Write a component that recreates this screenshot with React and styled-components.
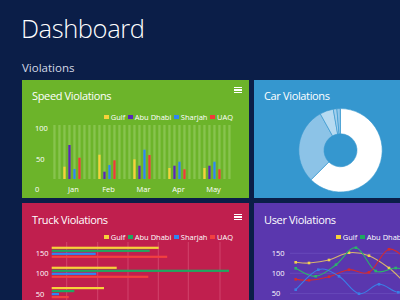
import styled, { createGlobalStyle } from "styled-components";

const GlobalStyle = createGlobalStyle`
  html, body {
    margin: 0;
    overflow: hidden;
    background: #0b1e48;
  }
  body {
    font-family: "Open Sans", "Noto Sans", sans-serif;
  }
`;

const Page = styled.main`
  width: 400px;
  height: 300px;
  padding: 12px 0 0 21px;
  box-sizing: border-box;
  overflow: hidden;
`;

const Heading = styled.h1`
  margin: 0;
  font-size: 25.5px;
  font-weight: 300;
  line-height: 32px;
  letter-spacing: -0.4px;
  color: #ffffff;
`;

const SubHeading = styled.h2`
  margin: 16px 0 0 1px;
  font-size: 11.5px;
  font-weight: 400;
  line-height: 16px;
  color: #d3d9e6;
`;

const Grid = styled.div`
  display: grid;
  grid-template-columns: 227px 227px;
  grid-template-rows: 118px 118px;
  column-gap: 5px;
  row-gap: 5px;
  margin: 4px 0 0 1px;
`;

const Tile = styled.section`
  display: flex;
  flex-direction: column;
  background: ${(p) => p.$bg};
  color: #ffffff;
  overflow: hidden;
`;

const TileHeader = styled.header`
  display: flex;
  justify-content: space-between;
  align-items: flex-start;
  height: 28px;
  padding: 0 7px 0 10px;
`;

const TileTitle = styled.h3`
  margin: 0;
  padding-top: ${(p) => p.$pt || 8}px;
  font-size: 11px;
  font-weight: 400;
  line-height: 15px;
  letter-spacing: -0.35px;
`;

const Menu = styled.div`
  display: flex;
  flex-direction: column;
  justify-content: space-between;
  width: 8px;
  height: 6px;
  margin-top: ${(p) => p.$mt || 7}px;

  span {
    height: 1.3px;
    background: #ffffff;
  }
`;

const Legend = styled.ul`
  display: flex;
  justify-content: flex-end;
  align-items: center;
  gap: 3px;
  height: 10px;
  margin: ${(p) => p.$mt}px 0 0;
  padding: 0 16px 0 0;
  list-style: none;
  font-size: 7.5px;
  white-space: nowrap;
`;

const LegendItem = styled.li`
  display: flex;
  align-items: center;
  gap: 2px;
`;

const Swatch = styled.i`
  width: 4.5px;
  height: 4.5px;
  background: ${(p) => p.$color};
`;

const Chart = styled.svg`
  display: block;
  flex: 1;
  width: 227px;

  text {
    fill: #ffffff;
    font-size: 7.5px;
    font-family: "Open Sans", sans-serif;
  }
`;

const SERIES = [
  { name: "Gulf", color: "#f6d23a" },
  { name: "Abu Dhabi", color: "#5a26b8" },
  { name: "Sharjah", color: "#2f86f2" },
  { name: "UAQ", color: "#f03a3a" },
];

const TRUCK_SERIES = [
  { name: "Gulf", color: "#f6d23a" },
  { name: "Abu Dhabi", color: "#1ea860" },
  { name: "Sharjah", color: "#2f86f2" },
  { name: "UAQ", color: "#f24040" },
];

const speedData = [
  { month: "Jan", tops: [44.7, 23, 47, 35.7] },
  { month: "Feb", tops: [32.7, 49.7, 43, 38.3] },
  { month: "Mar", tops: [37.3, 43.7, 27.7, 33] },
  { month: "Apr", tops: [46, 43.7, 39.7, 47.3] },
  { month: "May", tops: [46, 43.7, 39.7, 47.3] },
];

const truckData = [
  { label: "150", y: 4.7, widths: [107, 98, 44, 115.5] },
  { label: "100", y: 24.7, widths: [65, 177.3, 44.6, 96.6] },
  { label: "50", y: 45, widths: [52.3, 22.6, 7.3, 17] },
];

const userLines = [
  {
    color: "#d8b46c",
    dot: "#f4d24c",
    pts: [[41.7, 20.3], [55, 21], [75, 18], [95, 10.7], [115, 13.7], [135, 26], [148, 38]],
  },
  {
    color: "#2bb46a",
    dot: "#2bb46a",
    pts: [[41.7, 26.3], [61.7, 34.3], [82, 22.7], [102, 5.7], [121.7, 29], [141.7, 26], [160, 30]],
  },
  {
    color: "#d42a2f",
    dot: "#d42a2f",
    pts: [[41.7, 37.3], [55, 38.3], [75, 34.7], [95, 27.7], [115, 30.3], [135, 7.3], [155, 20]],
  },
  {
    color: "#3a7ee6",
    dot: "#3a7ee6",
    pts: [[41.7, 47.7], [64.3, 27.7], [85, 34.3], [105, 51.7], [125, 42.3], [144.3, 50.3], [160, 44]],
  },
];

const polar = (cx, cy, r, deg) => {
  const a = ((deg - 90) * Math.PI) / 180;
  return [cx + r * Math.cos(a), cy + r * Math.sin(a)];
};

function slicePath(cx, cy, r0, r1, a0, a1) {
  const large = a1 - a0 > 180 ? 1 : 0;
  const [x0, y0] = polar(cx, cy, r1, a0);
  const [x1, y1] = polar(cx, cy, r1, a1);
  const [x2, y2] = polar(cx, cy, r0, a1);
  const [x3, y3] = polar(cx, cy, r0, a0);
  return `M${x0} ${y0} A${r1} ${r1} 0 ${large} 1 ${x1} ${y1} L${x2} ${y2} A${r0} ${r0} 0 ${large} 0 ${x3} ${y3} Z`;
}

// catmull-rom -> cubic bezier, soft tension
function smoothPath(pts, t = 0.18) {
  let d = `M${pts[0][0]} ${pts[0][1]}`;
  for (let i = 0; i < pts.length - 1; i++) {
    const p0 = pts[i - 1] || pts[i];
    const p1 = pts[i];
    const p2 = pts[i + 1];
    const p3 = pts[i + 2] || p2;
    const c1 = [p1[0] + (p2[0] - p0[0]) * t, p1[1] + (p2[1] - p0[1]) * t];
    const c2 = [p2[0] - (p3[0] - p1[0]) * t, p2[1] - (p3[1] - p1[1]) * t];
    d += ` C${c1[0]} ${c1[1]} ${c2[0]} ${c2[1]} ${p2[0]} ${p2[1]}`;
  }
  return d;
}

const carSlices = [
  [0, 225, "#ffffff"],
  [225, 331, "#8cc3e7"],
  [331, 350, "#b6daf1"],
  [350, 355, "#a2cfec"],
  [355, 359.6, "#94c8ea"],
];

function Hamburger({ mt }) {
  return (
    <Menu $mt={mt}>
      <span />
      <span />
      <span />
    </Menu>
  );
}

function ChartLegend({ series, mt }) {
  return (
    <Legend $mt={mt}>
      {series.map((s) => (
        <LegendItem key={s.name}>
          <Swatch $color={s.color} />
          {s.name}
        </LegendItem>
      ))}
    </Legend>
  );
}

function SpeedChart() {
  const stripes = Array.from({ length: 36 }, (_, i) => 31.3 + i * 5);
  return (
    <Chart viewBox="0 0 227 76" preserveAspectRatio="xMinYMin meet">
      {stripes.map((x) => (
        <rect key={x} x={x} y={3} width={2.3} height={54} fill="#8fc858" opacity="0.8" />
      ))}
      {speedData.map((g, gi) =>
        g.tops.map((t, i) => (
          <rect
            key={g.month + i}
            x={41.3 + gi * 35 + i * 5}
            y={t}
            width={2.3}
            height={57 - t}
            fill={SERIES[i].color}
          />
        ))
      )}
      <text x={13} y={9}>100</text>
      <text x={14} y={40}>50</text>
      <text x={13} y={70}>0</text>
      {speedData.map((g, gi) => (
        <text key={g.month} x={51.5 + gi * 35} y={70} textAnchor="middle">
          {g.month}
        </text>
      ))}
    </Chart>
  );
}

function CarChart() {
  return (
    <Chart viewBox="0 0 227 90" preserveAspectRatio="xMinYMin meet">
      {carSlices.map(([a0, a1, c]) => (
        <path
          key={a0}
          d={slicePath(86.5, 42.3, 16.5, 41.7, a0, a1)}
          fill={c}
          stroke="#3597cf"
          strokeWidth="0.6"
        />
      ))}
    </Chart>
  );
}

function TruckChart() {
  const grid = [44.7, 75.7, 106, 136.3, 166.3, 198];
  return (
    <Chart viewBox="0 0 227 79" preserveAspectRatio="xMinYMin meet">
      {grid.map((x) => (
        <line key={x} x1={x} y1={0} x2={x} y2={79} stroke="#d64b73" strokeWidth="0.8" />
      ))}
      {truckData.map((g) =>
        g.widths.map((w, i) => (
          <rect
            key={g.label + i}
            x={29.7}
            y={g.y + i * 3}
            width={w}
            height={2.2}
            fill={TRUCK_SERIES[i].color}
          />
        ))
      )}
      {truckData.map((g) => (
        <text key={g.label} x={13.7} y={g.y + 9.5}>
          {g.label}
        </text>
      ))}
    </Chart>
  );
}

function UserChart() {
  const labels = [
    ["150", 13.5],
    ["100", 33.8],
    ["50", 54.4],
  ];
  return (
    <Chart viewBox="0 0 227 79" preserveAspectRatio="xMinYMin meet">
      {[11.3, 31.3, 51.6].map((y) => (
        <line key={y} x1={36} y1={y} x2={227} y2={y} stroke="#6a4cbc" strokeWidth="0.8" />
      ))}
      {labels.map(([t, y]) => (
        <text key={t} x={17.7} y={y}>
          {t}
        </text>
      ))}
      {userLines.map((l) => (
        <g key={l.color}>
          <path d={smoothPath(l.pts)} fill="none" stroke={l.color} strokeWidth="1.1" />
          {l.pts.slice(0, 6).map(([x, y]) => (
            <rect key={x} x={x - 1.3} y={y - 1.3} width={2.6} height={2.6} fill={l.dot} />
          ))}
        </g>
      ))}
    </Chart>
  );
}

export default function App() {
  return (
    <>
      <GlobalStyle />
      <Page>
        <Heading>Dashboard</Heading>
        <SubHeading>Violations</SubHeading>
        <Grid>
          <Tile $bg="#6cb42a">
            <TileHeader>
              <TileTitle>Speed Violations</TileTitle>
              <Hamburger />
            </TileHeader>
            <ChartLegend series={SERIES} mt={4} />
            <SpeedChart />
          </Tile>
          <Tile $bg="#3597cf">
            <TileHeader>
              <TileTitle>Car Violations</TileTitle>
            </TileHeader>
            <CarChart />
          </Tile>
          <Tile $bg="#c01f4e">
            <TileHeader>
              <TileTitle $pt={9}>Truck Violations</TileTitle>
              <Hamburger mt={11} />
            </TileHeader>
            <ChartLegend series={TRUCK_SERIES} mt={1} />
            <TruckChart />
          </Tile>
          <Tile $bg="#5a37ae">
            <TileHeader>
              <TileTitle $pt={9}>User Violations</TileTitle>
            </TileHeader>
            <ChartLegend series={TRUCK_SERIES} mt={1} />
            <UserChart />
          </Tile>
        </Grid>
      </Page>
    </>
  );
}
